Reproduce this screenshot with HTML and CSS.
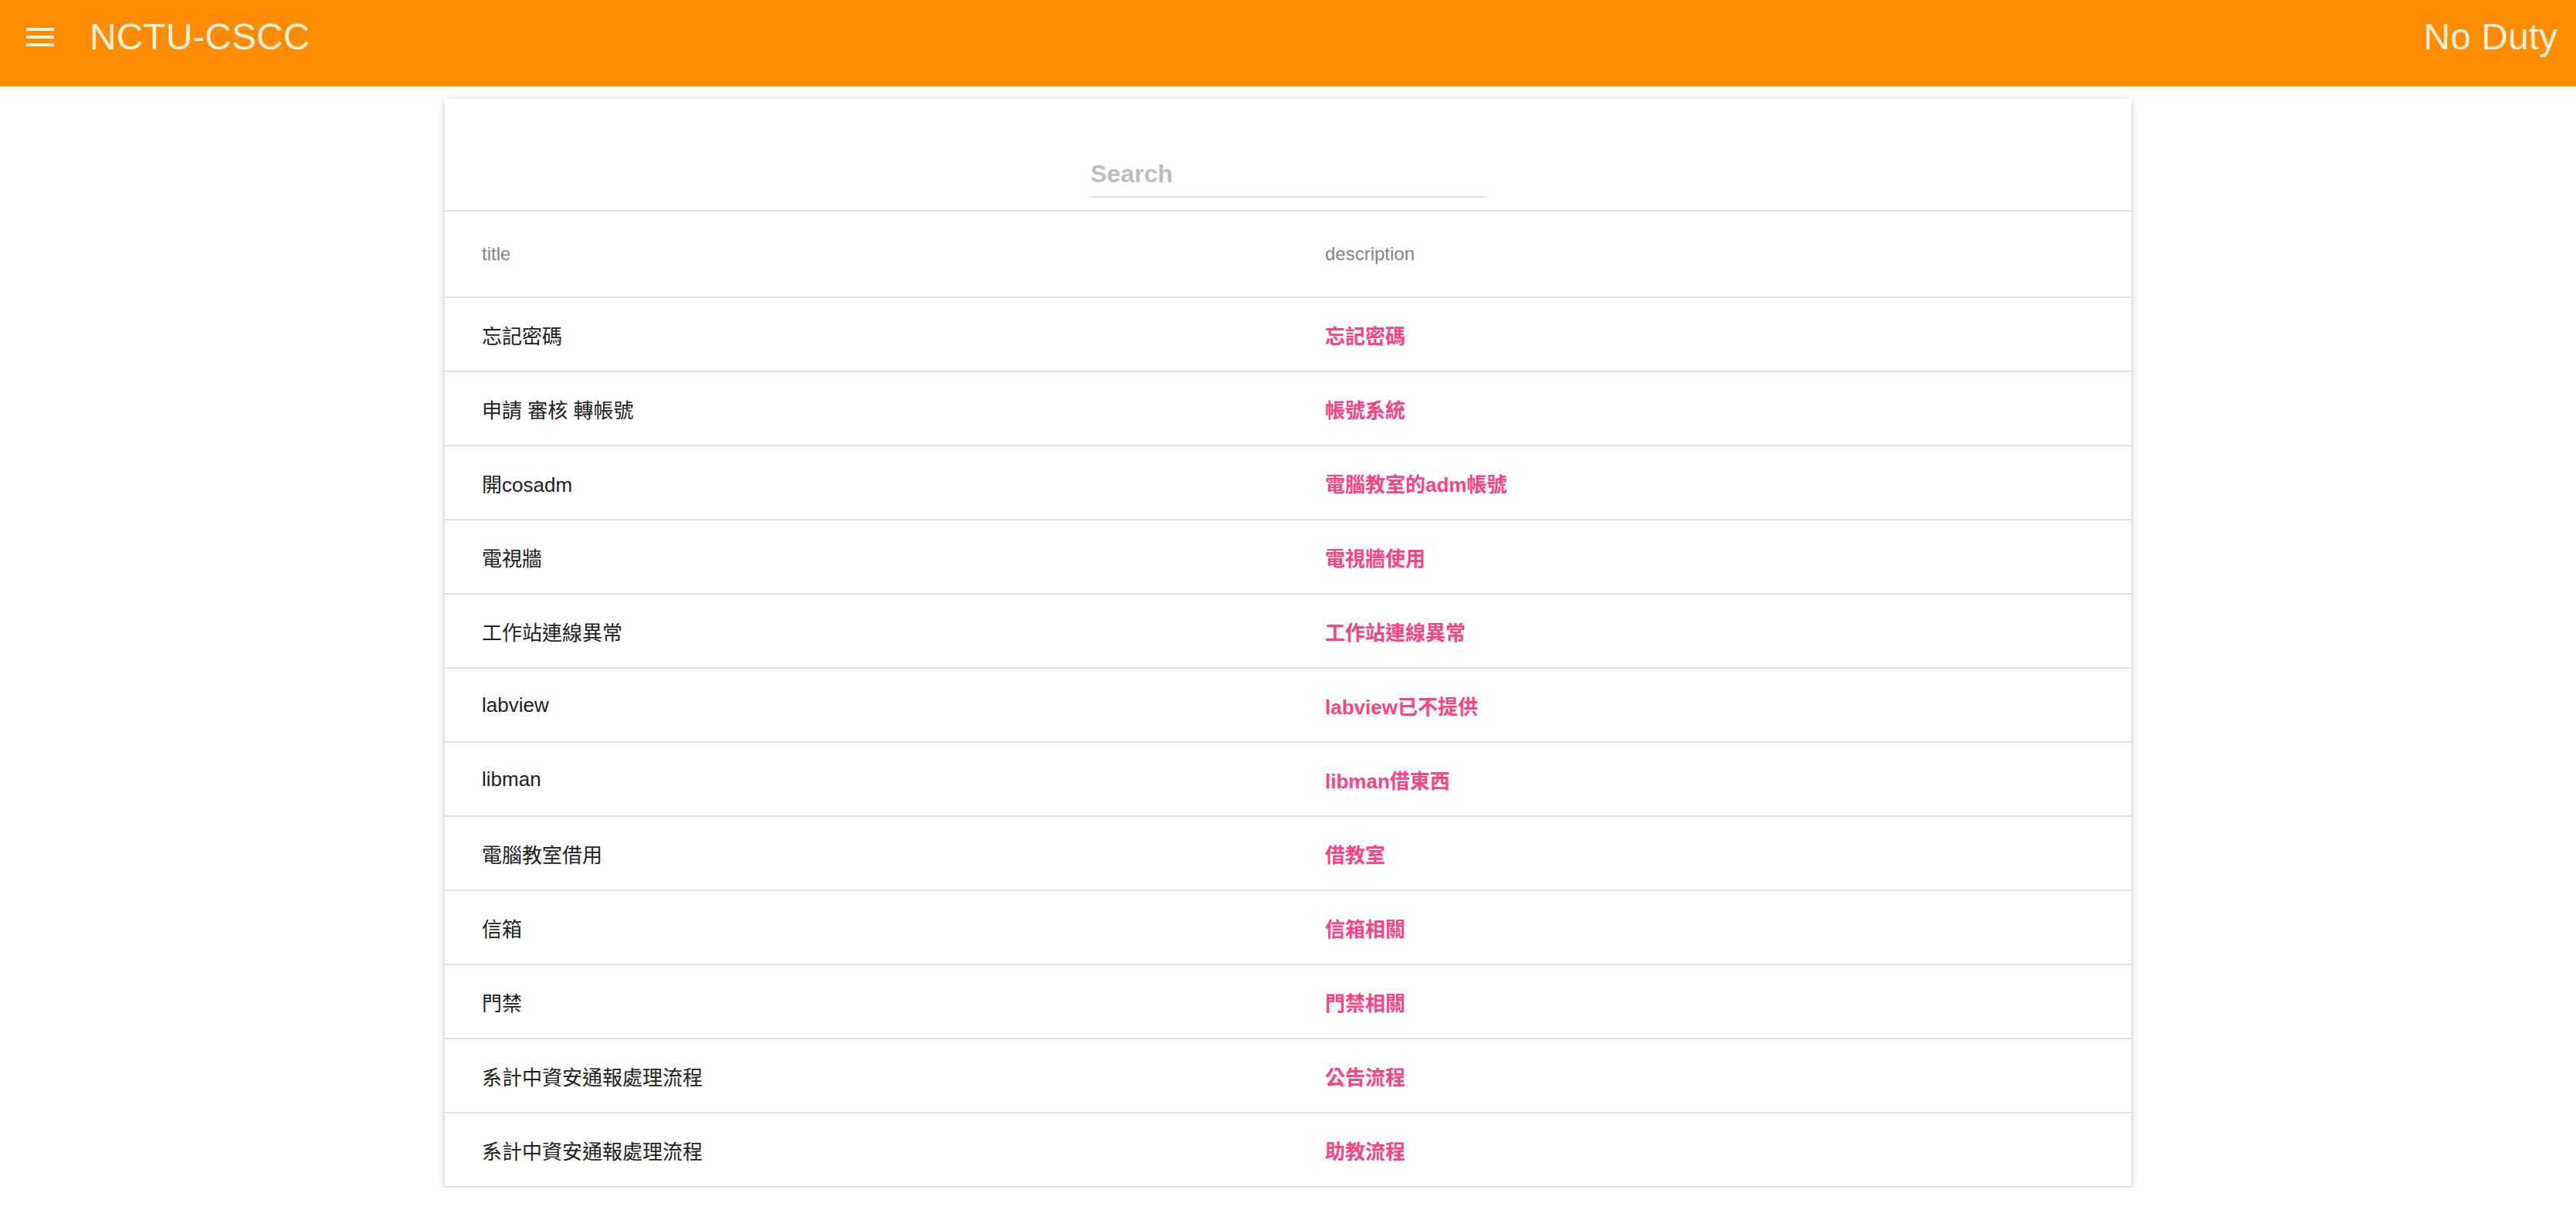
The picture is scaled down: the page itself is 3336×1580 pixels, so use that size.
FILE: index.html
```html
<!DOCTYPE html>
<html lang="zh-Hant">
<head>
<meta charset="utf-8">
<title>NCTU-CSCC</title>
<link rel="stylesheet" href="styles.css">
</head>
<body>
<header class="app-bar">
  <button class="menu-btn" aria-label="menu">
    <svg viewBox="0 0 24 24" width="48" height="48"><path d="M3 18h18v-2H3v2zm0-5h18v-2H3v2zm0-7v2h18V6H3z" fill="currentColor"/></svg>
  </button>
  <h1 class="app-title">NCTU-CSCC</h1>
  <div class="duty">No Duty</div>
</header>
<main class="card">
  <div class="search-area">
    <input class="search-input" type="text" placeholder="Search">
  </div>
  <table class="faq">
    <thead>
      <tr><th>title</th><th>description</th></tr>
    </thead>
    <tbody>
      <tr><td>忘記密碼</td><td class="desc">忘記密碼</td></tr>
      <tr><td>申請 審核 轉帳號</td><td class="desc">帳號系統</td></tr>
      <tr><td>開cosadm</td><td class="desc">電腦教室的adm帳號</td></tr>
      <tr><td>電視牆</td><td class="desc">電視牆使用</td></tr>
      <tr><td>工作站連線異常</td><td class="desc">工作站連線異常</td></tr>
      <tr><td>labview</td><td class="desc">labview已不提供</td></tr>
      <tr><td>libman</td><td class="desc">libman借東西</td></tr>
      <tr><td>電腦教室借用</td><td class="desc">借教室</td></tr>
      <tr><td>信箱</td><td class="desc">信箱相關</td></tr>
      <tr><td>門禁</td><td class="desc">門禁相關</td></tr>
      <tr><td>系計中資安通報處理流程</td><td class="desc">公告流程</td></tr>
      <tr><td>系計中資安通報處理流程</td><td class="desc">助教流程</td></tr>
    </tbody>
  </table>
</main>
</body>
</html>
```

FILE: styles.css
```css
* { box-sizing: border-box; }

html, body {
  margin: 0;
  padding: 0;
  background: #ffffff;
  font-family: "Liberation Sans", Arial, "Noto Sans CJK TC", sans-serif;
}

.app-bar {
  height: 112px;
  background: #ff8c00;
  color: #fff0dc;
  display: flex;
  align-items: flex-start;
  padding: 24px 24px 0 28px;
}

.menu-btn {
  width: 48px;
  height: 48px;
  padding: 0;
  margin: 0;
  border: none;
  background: none;
  color: inherit;
  display: block;
}

.menu-btn svg { display: block; }

.app-title {
  margin: 0 0 0 40px;
  font-size: 48px;
  font-weight: 400;
  line-height: 48px;
  flex: 1;
}

.duty {
  font-size: 48px;
  line-height: 48px;
}

.card {
  width: 2184px;
  margin: 16px auto 0;
  background: #fff;
  box-shadow: 0 2px 12px rgba(0,0,0,0.12), 0 2px 8px rgba(0,0,0,0.12);
}

.search-area {
  display: flex;
  justify-content: center;
  padding: 70px 0 16px;
  border-bottom: 2px solid #e0e0e0;
}

.search-input {
  width: 512px;
  height: 58px;
  padding: 0 0 2px;
  margin: 0;
  border: none;
  border-bottom: 2px solid #e0e0e0;
  outline: none;
  background: transparent;
  font-family: "Liberation Sans", Arial, sans-serif;
  font-size: 32px;
  font-weight: 700;
  color: #212121;
}

.search-input::placeholder {
  color: #bdbdbd;
  opacity: 1;
}

.faq {
  width: 100%;
  table-layout: fixed;
  border-collapse: separate;
  border-spacing: 0;
}

.faq th,
.faq td {
  text-align: left;
  padding: 0 48px;
  border-bottom: 2px solid #e0e0e0;
  vertical-align: middle;
  box-sizing: border-box;
}

.faq th {
  height: 112px;
  font-size: 24px;
  font-weight: 400;
  color: #858585;
}

.faq td {
  height: 96px;
  font-size: 26px;
  color: #212121;
  font-family: "Liberation Sans", Arial, "Noto Sans CJK TC", sans-serif;
}

.faq td.desc {
  color: #ff4081;
  font-weight: 700;
}
```
